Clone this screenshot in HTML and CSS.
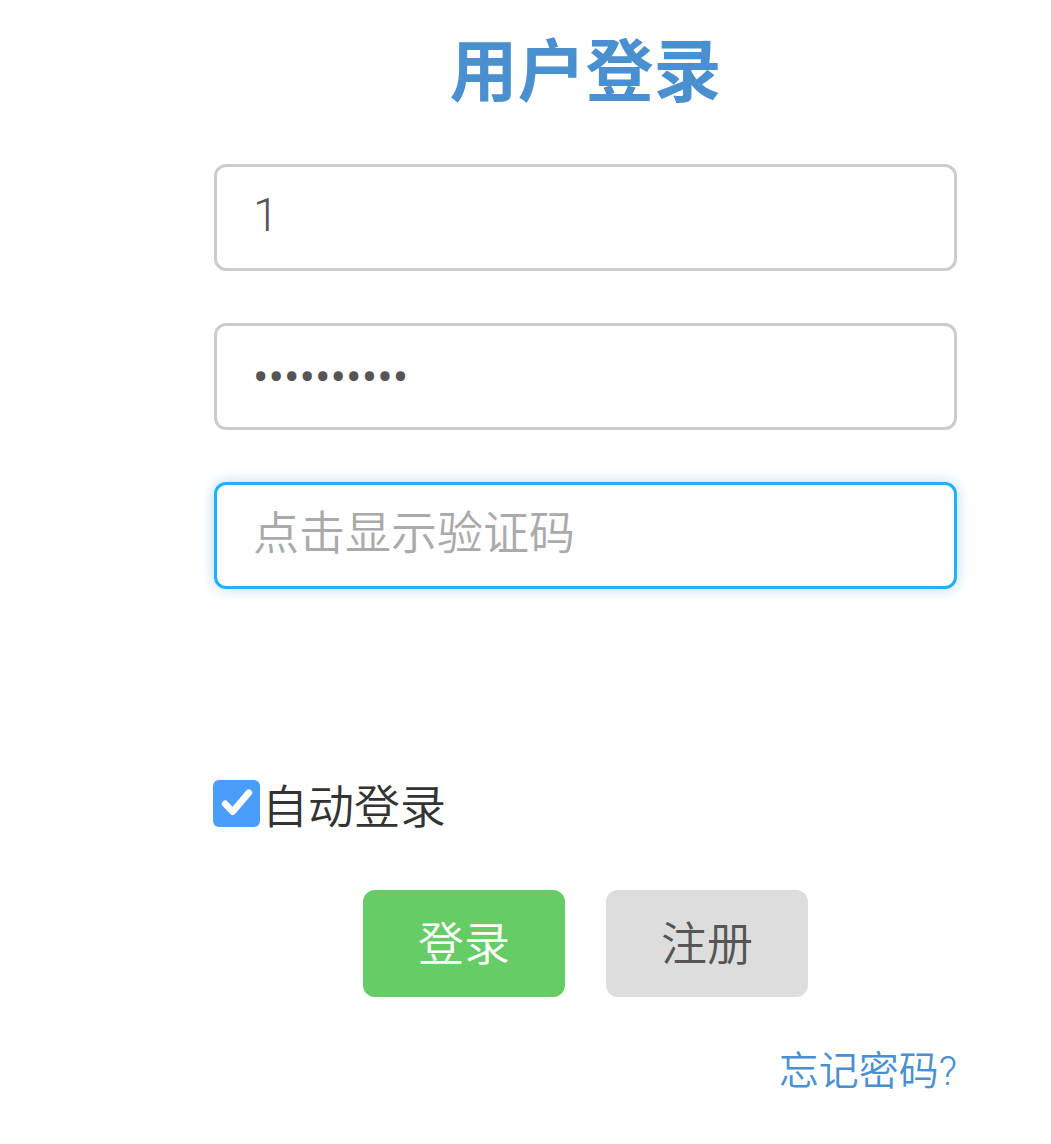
FILE: index.html
```html
<!DOCTYPE html>
<html lang="zh-CN">
<head>
    <meta charset="UTF-8">
    <meta name="viewport" content="width=device-width, initial-scale=1.0">
    <title>用户登录</title>
    <link rel="stylesheet" href="styles.css">
</head>
<body>
    <div class="login">
        <h1 class="title">用户登录</h1>
        <form class="form">
            <input class="field" type="text" value="1">
            <input class="field pwd" type="password" value="1234567890">
            <input class="field focus" type="text" placeholder="点击显示验证码">
            <div class="captcha"></div>
            <label class="remember">
                <span class="box">
                    <svg viewBox="0 0 24 24" width="38" height="38"><path d="M4.5 12.5l4.8 5L19.5 5.5" fill="none" stroke="#fff" stroke-width="4.2" stroke-linecap="round" stroke-linejoin="round"/></svg>
                </span>
                <span>自动登录</span>
            </label>
            <div class="actions">
                <button type="button" class="btn btn-login">登录</button>
                <button type="button" class="btn btn-reg">注册</button>
            </div>
            <a class="forgot" href="#">忘记密码?</a>
        </form>
    </div>
</body>
</html>
```

FILE: styles.css
```css
body {
    margin: 0;
    font-family: Roboto, "Noto Sans CJK SC", sans-serif;
    font-weight: 350;
    background: #fff;
}
.login {
    width: 743px;
    margin-left: 214px;
}
.title {
    margin: 23px 0 41px;
    height: 100px;
    line-height: 100px;
    text-align: center;
    font-size: 68px;
    font-weight: bold;
    color: #4a90d0;
}
.form { display: flex; flex-direction: column; }
.field {
    box-sizing: border-box;
    width: 100%;
    height: 107px;
    margin: 0 0 52px;
    padding: 0 36px 6px;
    border: 3px solid #cccccc;
    border-radius: 12px;
    font-family: inherit;
    font-weight: 350;
    font-size: 46px;
    color: #555;
    outline: none;
    background: #fff;
}
.field::placeholder { color: #aaa; }
.pwd { font-family: Roboto, sans-serif; font-weight: 400; padding-bottom: 0; }
.field.focus {
    border-color: #1cb4f6;
    box-shadow: 0 0 14px rgba(100, 170, 235, 0.45);
}
.captcha { height: 132px; }
.remember {
    display: flex;
    align-items: center;
    height: 60px;
    font-size: 46px;
    color: #333;
}
.box {
    width: 47px;
    height: 47px;
    margin-left: -1px;
    margin-right: 2px;
    border-radius: 6px;
    background: #4a9df8;
    display: flex;
    align-items: center;
    justify-content: center;
}
.actions {
    display: flex;
    justify-content: center;
    gap: 41px;
    margin-top: 57px;
}
.btn {
    width: 202px;
    height: 107px;
    padding: 0 0 8px;
    border: none;
    border-radius: 12px;
    font-family: inherit;
    font-weight: 350;
    font-size: 46px;
    cursor: pointer;
}
.btn-login { background: #66cc66; color: #fff; }
.btn-reg { background: #dddddd; color: #555; }
.forgot {
    align-self: flex-end;
    margin-top: 42px;
    font-size: 40px;
    color: #4a90d0;
    text-decoration: none;
}
```
